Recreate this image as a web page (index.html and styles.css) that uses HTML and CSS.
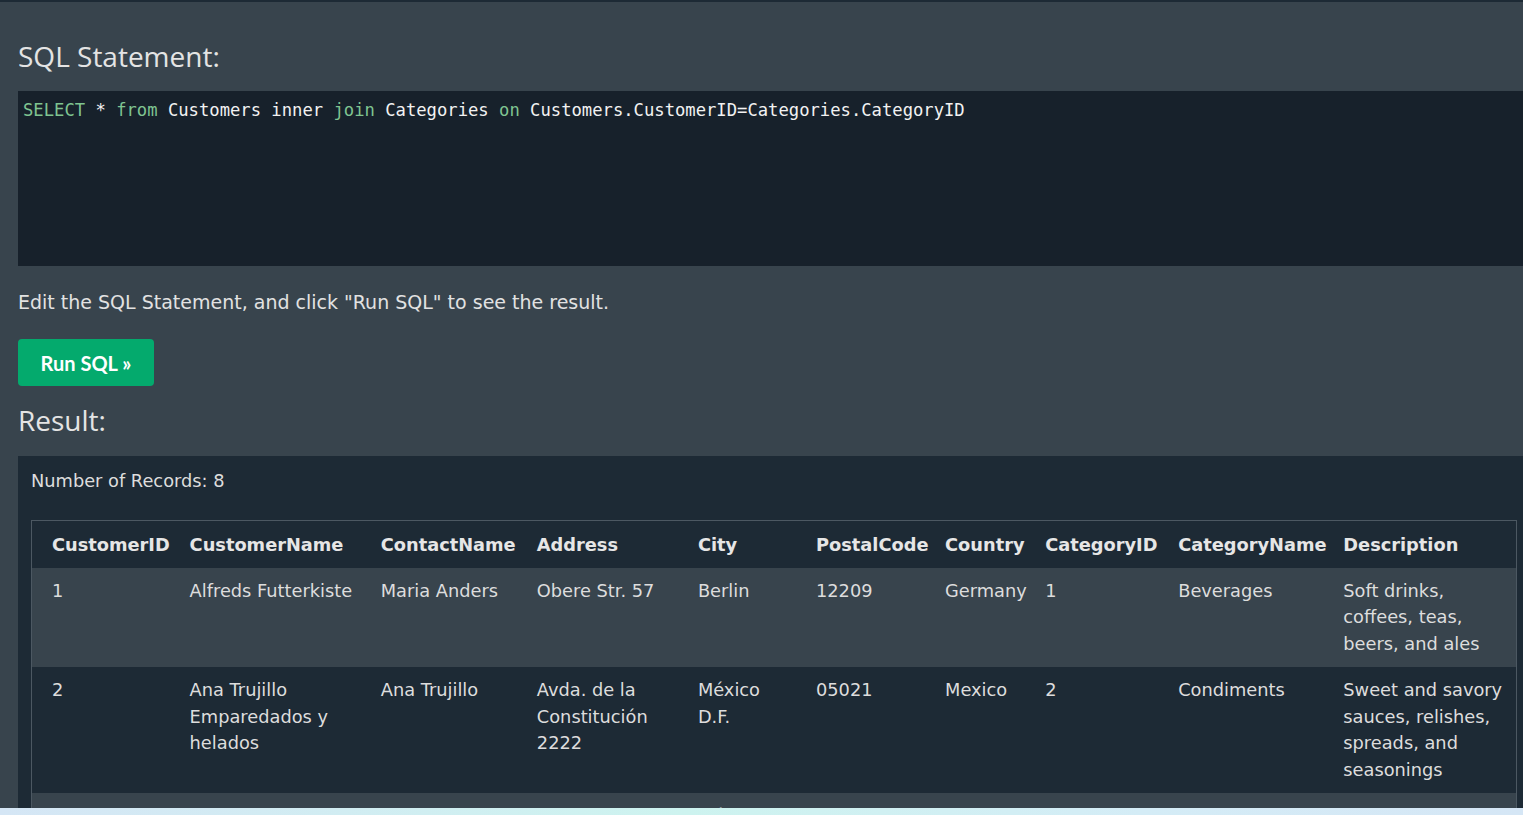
FILE: index.html
```html
<!DOCTYPE html>
<html lang="en">
<head>
<meta charset="utf-8">
<title>SQL Tryit</title>
<link rel="stylesheet" href="styles.css">
</head>
<body>
<div class="main">
  <h2 class="heading heading-sql">SQL Statement:</h2>
  <div class="code"><span class="kw">SELECT</span> * <span class="kw">from</span> Customers inner <span class="kw">join</span> Categories <span class="kw">on</span> Customers.CustomerID=Categories.CategoryID</div>
  <p class="hint">Edit the SQL Statement, and click "Run SQL" to see the result.</p>
  <button class="run">Run SQL »</button>
  <h2 class="heading heading-result">Result:</h2>
  <div class="result">
    <div class="count">Number of Records: 8</div>
    <table class="grid">
      <colgroup>
        <col class="c1"><col class="c2"><col class="c3"><col class="c4"><col class="c5">
        <col class="c6"><col class="c7"><col class="c8"><col class="c9"><col class="c10">
      </colgroup>
      <thead>
        <tr><th>CustomerID</th><th>CustomerName</th><th>ContactName</th><th>Address</th><th>City</th><th>PostalCode</th><th>Country</th><th>CategoryID</th><th>CategoryName</th><th>Description</th></tr>
      </thead>
      <tbody>
        <tr><td>1</td><td>Alfreds Futterkiste</td><td>Maria Anders</td><td>Obere Str. 57</td><td>Berlin</td><td>12209</td><td>Germany</td><td>1</td><td>Beverages</td><td>Soft drinks, coffees, teas, beers, and ales</td></tr>
        <tr><td>2</td><td>Ana Trujillo Emparedados y helados</td><td>Ana Trujillo</td><td>Avda. de la Constitución 2222</td><td>México D.F.</td><td>05021</td><td>Mexico</td><td>2</td><td>Condiments</td><td>Sweet and savory sauces, relishes, spreads, and seasonings</td></tr>
        <tr><td>3</td><td>Antonio Moreno Taquería</td><td>Antonio Moreno</td><td>Mataderos 2312</td><td>México D.F.</td><td>05023</td><td>Mexico</td><td>3</td><td>Confections</td><td>Desserts, candies, and sweet breads</td></tr>
      </tbody>
    </table>
  </div>
</div>
<div class="bottom-bar"></div>
</body>
</html>
```
FILE: styles.css
```css
html, body {
  overflow: hidden;
}
body {
  margin: 0;
  background: #38444d;
  border-top: 2px solid #1d2a35;
  color: #dddddd;
  font-family: "DejaVu Sans", Verdana, sans-serif;
  font-size: 17.8px;
}
.main {
  padding-left: 18px;
}
.heading {
  font-family: "Open Sans", "Segoe UI", sans-serif;
  font-weight: 400;
  font-size: 28px;
  line-height: 36px;
  color: #e4e4e4;
}
.heading-sql {
  margin: 36px 0 17px;
}
.heading-result {
  margin: 16px 0 18px;
}
.code {
  box-sizing: border-box;
  height: 175px;
  background: #17212b;
  padding: 6px 5px;
  font-family: "DejaVu Sans Mono", Consolas, monospace;
  font-size: 17.2px;
  line-height: 26px;
  color: #f2f2f2;
  white-space: pre;
}
.kw {
  color: #7fc491;
}
.hint {
  margin: 23px 0 24px;
  font-size: 19px;
  line-height: 26px;
  color: #e2e2e2;
}
.run {
  display: block;
  width: 136px;
  height: 47px;
  border: none;
  border-radius: 4px;
  background: #04aa6d;
  color: #ffffff;
  font-family: Lato, "Source Sans Pro", sans-serif;
  font-weight: 700;
  font-size: 20px;
  padding: 0;
}
.result {
  background: #1d2a35;
  padding: 12px 6px 0 13px;
}
.count {
  line-height: 26px;
  margin-bottom: 26px;
}
.grid {
  width: 1486px;
  table-layout: fixed;
  border-collapse: collapse;
  border: 1px solid #4c5862;
}
.c1 { width: 148px; }
.c2 { width: 191px; }
.c3 { width: 156px; }
.c4 { width: 161px; }
.c5 { width: 118px; }
.c6 { width: 129px; }
.c7 { width: 100px; }
.c8 { width: 133px; }
.c9 { width: 165px; }
.c10 { width: 183px; }
.grid th,
.grid td {
  text-align: left;
  vertical-align: top;
  padding: 10px 10px 10px 10px;
  line-height: 26.5px;
  color: #dddddd;
}
.grid th:first-child,
.grid td:first-child {
  padding-left: 20px;
}
.grid th {
  font-weight: 700;
  color: #e6e6e6;
  white-space: nowrap;
  padding-top: 11px;
  padding-bottom: 9px;
}
.grid thead tr {
  background: #1d2a35;
}
.grid tbody tr:nth-child(odd) {
  background: #38444d;
}
.grid tbody tr:nth-child(even) {
  background: #1d2a35;
}
.bottom-bar {
  position: fixed;
  left: 0;
  right: 0;
  bottom: 0;
  height: 7px;
  background: linear-gradient(90deg, #d5e6f5 0%, #cdf3ef 45%, #d4ecf6 75%, #d5e6f5 100%);
}
```
